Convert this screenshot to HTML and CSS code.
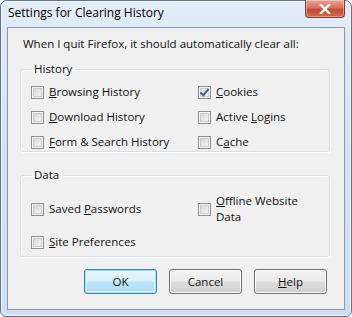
FILE: index.html
```html
<!DOCTYPE html>
<html lang="en">
  <head>
    <meta charset="UTF-8" />
    <title>Settings for Clearing History</title>
    <link rel="stylesheet" href="styles.css">
  </head>
  <body>
    <div class="window">
      <div class="titlebar">
        <span class="title">Settings for Clearing History</span>
        <button class="close-btn" aria-label="Close">
          <svg width="12" height="10" viewBox="0 0 12 10">
            <path d="M2 1 L10 9 M10 1 L2 9" stroke="#fff" stroke-width="2.4" stroke-linecap="square" />
          </svg>
        </button>
      </div>

      <div class="client">
        <p class="intro">When I quit Firefox, it should automatically clear all:</p>

        <fieldset class="group history">
          <legend>History</legend>
          <div class="options">
            <label class="option"><span class="box"></span><span><u>B</u>rowsing History</span></label>
            <label class="option"><span class="box checked"></span><span><u>C</u>ookies</span></label>
            <label class="option"><span class="box"></span><span><u>D</u>ownload History</span></label>
            <label class="option"><span class="box"></span><span>Active <u>L</u>ogins</span></label>
            <label class="option"><span class="box"></span><span><u>F</u>orm &amp; Search History</span></label>
            <label class="option"><span class="box"></span><span>C<u>a</u>che</span></label>
          </div>
        </fieldset>

        <fieldset class="group data">
          <legend>Data</legend>
          <div class="options">
            <label class="option"><span class="box"></span><span>Saved <u>P</u>asswords</span></label>
            <label class="option"><span class="box"></span><span><u>O</u>ffline Website<br />Data</span></label>
            <label class="option"><span class="box"></span><span><u>S</u>ite Preferences</span></label>
          </div>
        </fieldset>

        <div class="buttons">
          <button class="btn default">OK</button>
          <button class="btn">Cancel</button>
          <button class="btn"><u>H</u>elp</button>
        </div>
      </div>
    </div>
  </body>
</html>
```

FILE: styles.css
```css
* {
  margin: 0;
  padding: 0;
  box-sizing: border-box;
}

body {
  background: #ffffff;
  font-family: "Open Sans", "Noto Sans", sans-serif;
  font-size: 11.5px;
  color: #111;
}

.window {
  position: relative;
  width: 352px;
  height: 317px;
  border: 1px solid #5d7491;
  border-radius: 7px 7px 6px 6px;
  background: linear-gradient(to bottom, #e3edf8 0%, #d5e3f3 40%, #cfdef0 100%);
  box-shadow: inset 0 0 0 1px #f3f7fc;
}

.titlebar {
  height: 26px;
  padding: 3px 0 0 7px;
}

.title {
  font-size: 12px;
  color: #000;
}

.close-btn {
  position: absolute;
  top: -1px;
  right: 6px;
  width: 40px;
  height: 18px;
  border: 1px solid #7b3b33;
  border-top: none;
  border-radius: 0 0 4px 4px;
  background: linear-gradient(to bottom, #e7a597 0%, #d8715d 45%, #c44c33 55%, #cf6a4d 100%);
  display: flex;
  align-items: center;
  justify-content: center;
  box-shadow: inset 0 0 0 1px rgba(255, 255, 255, 0.35);
}

.client {
  margin: 0 6px;
  height: 283px;
  border: 1px solid #8397b2;
  background: #f0f0f0;
  padding: 8px 14px 0 12px;
}

.intro {
  height: 16px;
  line-height: 16px;
  padding-left: 3px;
  margin-bottom: 10px;
}

.group {
  border: 1px solid #d5dfe5;
  border-radius: 3px;
  box-shadow: inset 1px 1px 0 #fff, 1px 1px 0 #fff;
  padding: 0 10px;
}

.group legend {
  margin-left: 1px;
  padding: 0 4px 0 2px;
  line-height: 14px;
}

.options {
  display: grid;
  grid-template-columns: 167px 1fr;
}

.history {
  height: 90px;
  margin-bottom: 16px;
}

.history .options {
  row-gap: 7px;
  padding-top: 7px;
}

.data {
  height: 89px;
}

.data .options {
  row-gap: 8px;
  padding-top: 11px;
}

.option {
  display: flex;
  align-items: center;
  gap: 5px;
  min-height: 18px;
  line-height: 16px;
}

.box {
  flex: none;
  width: 13px;
  height: 13px;
  border: 1px solid #8e8f8f;
  background: linear-gradient(135deg, #cfcfcf 0%, #eeeeee 70%, #f8f8f8 100%);
  box-shadow: inset 0 0 0 1px #f4f4f4, inset 0 0 0 2px #cdcdcd;
  position: relative;
}

.box.checked::after {
  content: "";
  position: absolute;
  left: 3px;
  top: 0px;
  width: 3px;
  height: 7px;
  border: solid #4a5e95;
  border-width: 0 2px 2px 0;
  transform: rotate(40deg);
}

.buttons {
  display: flex;
  justify-content: flex-end;
  gap: 12px;
  padding: 12px 3px 0 0;
}

.btn {
  width: 73px;
  height: 25px;
  font-family: inherit;
  font-size: 11.5px;
  color: #111;
  border: 1px solid #707070;
  border-radius: 3px;
  background: linear-gradient(to bottom, #f2f2f2 0%, #ebebeb 48%, #dddddd 52%, #cfcfcf 100%);
  box-shadow: inset 0 0 0 1px #fcfcfc;
}

.btn.default {
  border-color: #3c7fb1;
  box-shadow: inset 0 0 0 1px #a8dff5, inset 0 0 0 2px #e3f4fc;
  background: linear-gradient(to bottom, #eaf6fd 0%, #d9f0fc 48%, #bee6fd 52%, #a7d9f5 100%);
}
```
